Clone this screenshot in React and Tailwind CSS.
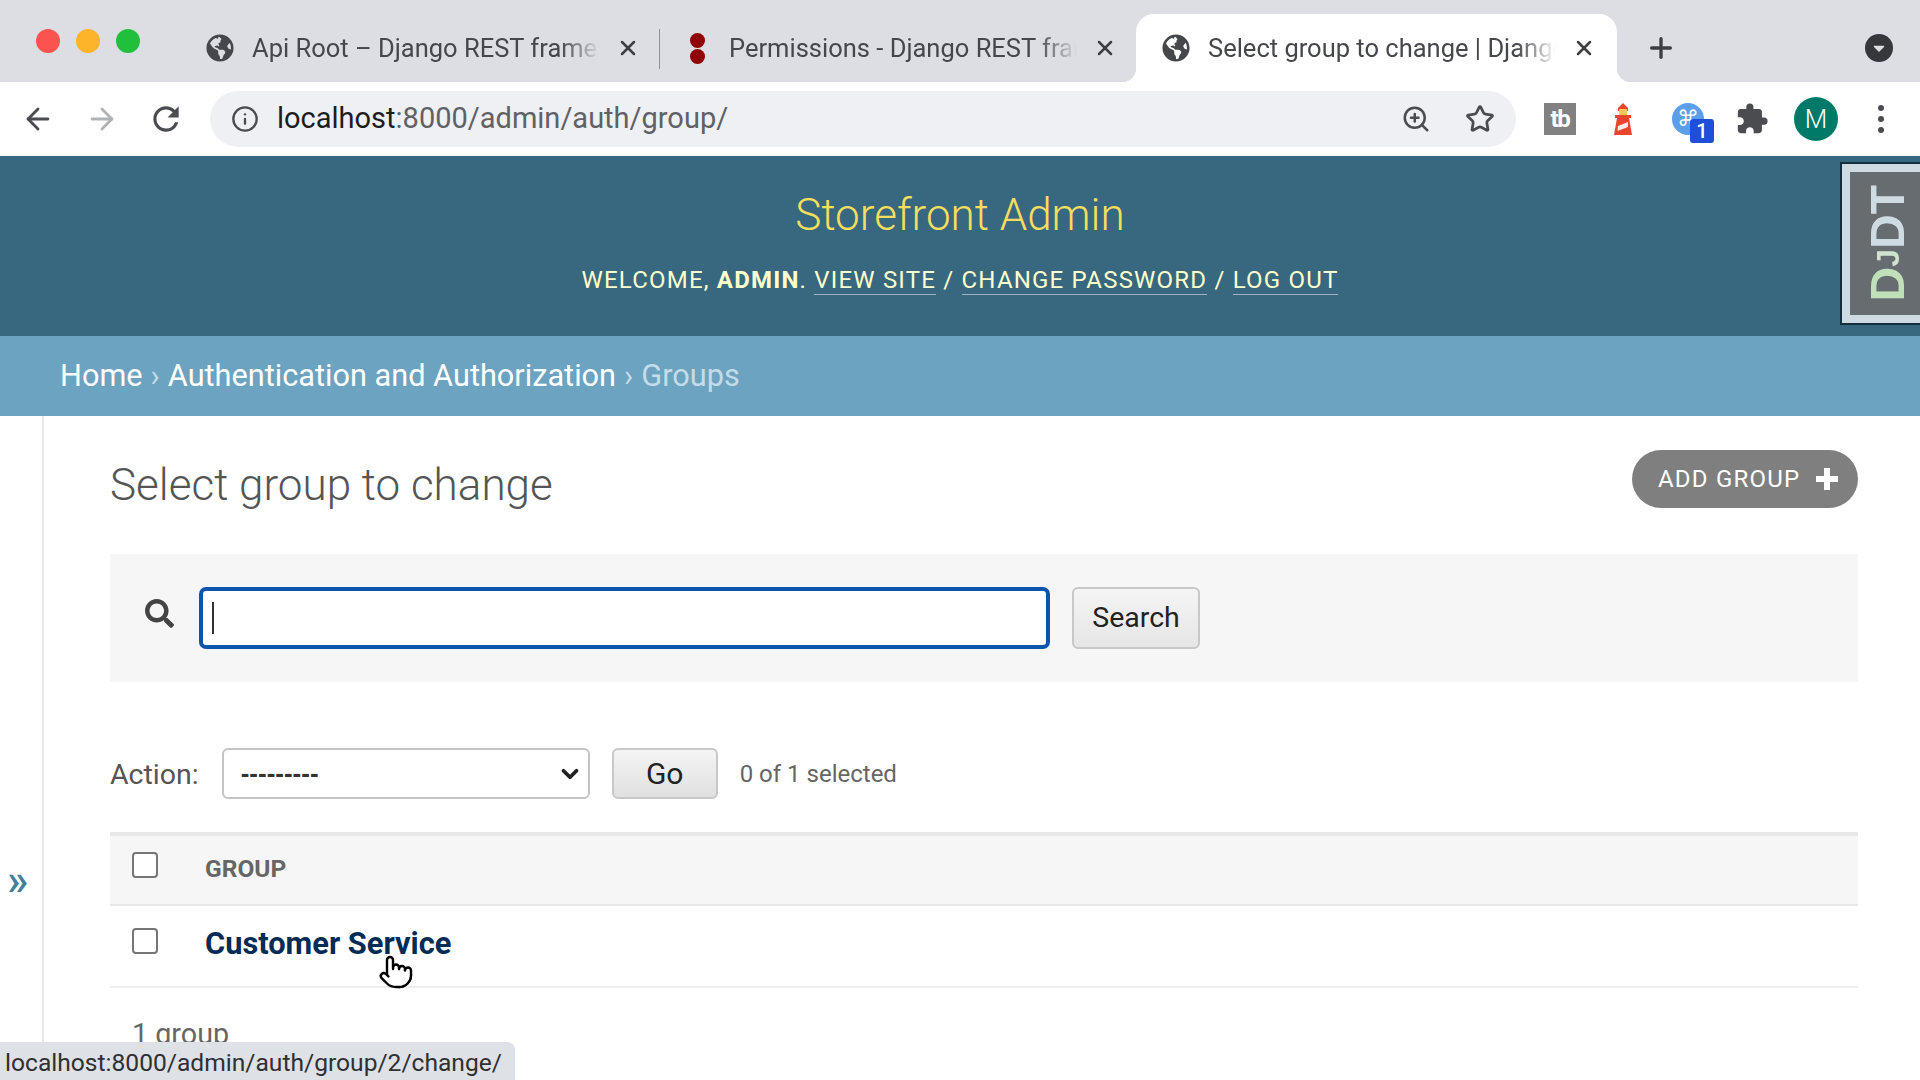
import React from 'react';
import { ArrowLeft, ArrowRight, Info, Star, X, Plus, ZoomIn, Pointer, ChevronDown } from 'lucide-react';
import { FaGlobeAmericas, FaSearch, FaCaretDown } from 'react-icons/fa';
import { MdExtension, MdRefresh } from 'react-icons/md';

const Tab = ({ icon, title, active, className }) => (
  <div className={`relative flex items-center h-[68px] ${active ? 'bg-white rounded-t-[18px]' : ''} ${className}`}>
    {active && (
      <>
        <div className="absolute -left-[14px] bottom-0 w-[14px] h-[14px] bg-[radial-gradient(circle_at_0_0,transparent_14px,white_14.500px)]" />
        <div className="absolute -right-[14px] bottom-0 w-[14px] h-[14px] bg-[radial-gradient(circle_at_100%_0,transparent_14px,white_14.500px)]" />
      </>
    )}
    <div className="w-[28px] flex justify-center shrink-0">{icon}</div>
    <div className="ml-[18px] w-[355px] whitespace-nowrap overflow-hidden text-[25.500px] text-[#45474b] [mask-image:linear-gradient(to_right,black_87%,transparent_98%)]">
      {title}
    </div>
    <X className="ml-[9px] w-[24px] h-[24px] text-[#3c3e42] shrink-0" strokeWidth={2.5} />
  </div>
);

const Checkbox = () => (
  <div className="w-[26px] h-[26px] rounded-[4px] border-2 border-[#767676] bg-white" />
);

const Lighthouse = () => (
  <svg viewBox="0 0 24 32" className="w-[28px] h-[32px]">
    <path d="M12 0l5 5v3H7V5z" fill="#e8452c" />
    <rect x="8" y="6" width="8" height="6" fill="#f6c958" />
    <rect x="4" y="12" width="16" height="3" fill="#e8452c" />
    <path d="M6 15h12l3 17H3z" fill="#e8452c" />
    <path d="M7 23l10-4v5L6.500 28z" fill="#fff" opacity="0.9" />
  </svg>
);

const App = () => {
  return (
    <div className="relative w-[1920px] h-[1080px] overflow-hidden bg-white [font-family:Roboto,sans-serif]">
      {/* tab strip */}
      <div className="flex items-end h-[82px] bg-[#dcdee3]">
        <div className="flex items-center gap-[16px] pl-[36px] w-[206px] self-start pt-[29px]">
          <div className="w-[24px] h-[24px] rounded-full bg-[#fb5350]" />
          <div className="w-[24px] h-[24px] rounded-full bg-[#fdb32a]" />
          <div className="w-[24px] h-[24px] rounded-full bg-[#20bf3c]" />
        </div>
        <Tab icon={<FaGlobeAmericas className="w-[28px] h-[28px] text-[#45474b]" />} title="Api Root – Django REST framework" className="w-[453px]" />
        <div className="w-[1px] h-[40px] bg-[#8e9094] mb-[13px]" />
        <Tab
          icon={
            <div className="flex flex-col items-center gap-[1px]">
              <div className="w-[15px] h-[15px] rounded-full bg-[#8f0000]" />
              <div className="w-[15px] h-[15px] rounded-full bg-[#8f0000]" />
            </div>
          }
          title="Permissions - Django REST framework"
          className="w-[476px] pl-[23px]"
        />
        <Tab
          active
          icon={<FaGlobeAmericas className="w-[28px] h-[28px] text-[#45474b]" />}
          title="Select group to change | Django site admin"
          className="w-[481px] pl-[26px]"
        />
        <Plus className="ml-[28px] mb-[18px] w-[32px] h-[32px] text-[#3c3e42]" strokeWidth={2.5} />
        <div className="ml-auto mr-[27px] mb-[20px] w-[28px] h-[28px] rounded-full bg-[#35373b] flex items-center justify-center">
          <FaCaretDown className="w-[18px] h-[18px] text-[#dcdee3]" />
        </div>
      </div>

      {/* toolbar */}
      <div className="flex items-center h-[74px] bg-white">
        <ArrowLeft className="ml-[21px] w-[34px] h-[34px] text-[#4a4c50]" strokeWidth={2} />
        <ArrowRight className="ml-[30px] w-[34px] h-[34px] text-[#b0b2b5]" strokeWidth={2} />
        <MdRefresh className="ml-[28px] w-[38px] h-[38px] text-[#4a4c50]" />
        <div className="ml-[25px] flex items-center w-[1306px] h-[56px] rounded-full bg-[#eef0f3]">
          <Info className="ml-[21px] w-[28px] h-[28px] text-[#4a4c50]" strokeWidth={2} />
          <div className="ml-[18px] text-[29px] text-[#5f6166]">
            <span className="text-[#1c1d20]">localhost</span>:8000/admin/auth/group/
          </div>
          <ZoomIn className="ml-auto w-[30px] h-[30px] text-[#4a4c50]" strokeWidth={2} />
          <Star className="ml-[34px] mr-[21px] w-[30px] h-[30px] text-[#4a4c50]" strokeWidth={2.2} />
        </div>
        <div className="ml-[28px] w-[32px] h-[32px] bg-[#818181] flex items-center justify-center text-white font-bold text-[24px] leading-none tracking-tighter">
          tb
        </div>
        <div className="ml-[33px] flex"><Lighthouse /></div>
        <div className="relative ml-[35px] w-[32px] h-[32px] rounded-full bg-[#5b9fe8] flex items-center justify-center text-white text-[22px] leading-none">
          ⌘
          <div className="absolute left-[18px] top-[16px] w-[24px] h-[24px] rounded-[3px] bg-[#1d4fd8] flex items-center justify-center text-[20px] font-medium">
            1
          </div>
        </div>
        <MdExtension className="ml-[31px] w-[34px] h-[34px] text-[#4a4c50]" />
        <div className="ml-[25px] w-[44px] h-[44px] rounded-full bg-[#007a68] flex items-center justify-center text-white text-[26px] font-light">
          M
        </div>
        <div className="ml-[40px] flex flex-col gap-[5px]">
          <div className="w-[6px] h-[6px] rounded-full bg-[#4a4c50]" />
          <div className="w-[6px] h-[6px] rounded-full bg-[#4a4c50]" />
          <div className="w-[6px] h-[6px] rounded-full bg-[#4a4c50]" />
        </div>
      </div>

      {/* admin header */}
      <div className="flex flex-col items-center h-[180px] pt-[32px] bg-[#376880]">
        <div className="text-[44px] leading-[54px] font-light text-[#f5dd5d]">Storefront Admin</div>
        <div className="mt-[20px] text-[24px] leading-[36px] tracking-[1.2px] uppercase text-[#ffc]">
          Welcome, <span className="font-bold">admin</span>.{' '}
          <span className="border-b border-[#9fb4bf]">View site</span> /{' '}
          <span className="border-b border-[#9fb4bf]">Change password</span> /{' '}
          <span className="border-b border-[#9fb4bf]">Log out</span>
        </div>
      </div>

      {/* breadcrumbs */}
      <div className="flex items-center h-[80px] pl-[60px] bg-[#6ba3c0] text-[30.700px] text-white">
        Home<span className="mx-[8px] text-[#c4dce8]">›</span>Authentication and Authorization
        <span className="mx-[8px] text-[#c4dce8]">›</span><span className="text-[#c4dce8]">Groups</span>
      </div>

      <div className="flex">
        {/* collapsed nav sidebar */}
        <div className="w-[44px] h-[664px] border-r-2 border-[#e8e8e8] flex flex-col">
          <div className="mt-[440px] pl-[7px] text-[44px] leading-[48px] font-medium text-[#447e9b]">»</div>
        </div>

        {/* content */}
        <div className="w-[1748px] ml-[66px]">
          <div className="flex items-start justify-between pt-[34px] h-[138px]">
            <h1 className="mt-[6px] text-[44px] leading-[58px] font-light text-[#555]">Select group to change</h1>
            <div className="flex items-center h-[58px] w-[226px] pl-[26px] rounded-full bg-[#7f7f7f] text-white text-[24px] tracking-[1.2px]">
              ADD GROUP
              <svg viewBox="0 0 22 22" className="ml-[16px] w-[22px] h-[22px]">
                <path d="M8 0h6v8h8v6h-8v8H8v-8H0V8h8z" fill="#fff" />
              </svg>
            </div>
          </div>

          <div className="flex items-center h-[128px] bg-[#f6f6f7]">
            <FaSearch className="ml-[35px] w-[29px] h-[29px] text-[#444] -mt-[10px]" />
            <div className="relative ml-[25px]">
              <input className="block w-[851px] h-[62px] rounded-[7px] border-4 border-[#0b55ad] bg-white outline-none" />
              <div className="absolute left-[13px] top-[15px] w-[2px] h-[32px] bg-[#333]" />
            </div>
            <div className="ml-[22px] w-[128px] h-[62px] rounded-[6px] border-2 border-[#c8c8c8] bg-gradient-to-b from-[#f4f4f4] to-[#e6e6e6] flex items-center justify-center text-[28.500px] text-[#222]">
              Search
            </div>
          </div>

          <div className="flex items-center mt-[66px] h-[51px]">
            <span className="pt-[3px] text-[28.500px] text-[#555]">Action:</span>
            <div className="relative ml-[23px]">
              <select className="block appearance-none w-[368px] h-[51px] pl-[17px] rounded-[6px] border-2 border-[#c4c4c4] bg-white text-[26px] font-bold text-[#333] [font-family:'Liberation_Sans',sans-serif]">
                <option>---------</option>
              </select>
              <ChevronDown className="absolute right-[7px] top-[13px] w-[26px] h-[26px] text-[#222]" strokeWidth={3.5} />
            </div>
            <div className="ml-[22px] w-[106px] h-[51px] rounded-[6px] border-2 border-[#c8c8c8] bg-gradient-to-b from-[#f4f4f4] to-[#e0e0e0] flex items-center justify-center text-[30px] text-[#222]">
              Go
            </div>
            <span className="ml-[22px] text-[24px] text-[#666]">0 of 1 selected</span>
          </div>

          <div className="mt-[33px] h-[74px] flex bg-[#f6f6f6] border-t-[4px] border-b-2 border-[#e8e8e8]">
            <div className="pl-[22px] pt-[16px]"><Checkbox /></div>
            <div className="ml-[47px] pt-[18px] text-[24.500px] leading-[30px] font-bold text-[#666]">GROUP</div>
          </div>
          <div className="h-[82px] flex border-b-2 border-[#eee]">
            <div className="pl-[22px] pt-[22px]"><Checkbox /></div>
            <div className="ml-[47px] pt-[18px] text-[30.800px] leading-[40px] font-bold text-[#022b56]">Customer Service</div>
          </div>
          <div className="mt-[26px] pl-[22px] text-[28.700px] leading-[40px] text-[#666]">1 group</div>
        </div>
      </div>

      {/* DjDT handle */}
      <div className="absolute left-[1840px] top-[162px] w-[100px] h-[163px] border-2 border-[#14303f] bg-[#666c70] outline-[8px] outline-[#cfdbe2] -outline-offset-[10px] flex items-center">
        <div className="ml-[22px] [writing-mode:vertical-rl] rotate-180 text-[48px] leading-none font-bold text-[#cfdbe2] [font-family:'Liberation_Sans',sans-serif]">
          <span className="text-[#bfe0b9]">D</span><span className="text-[#cfe4ce] text-[32px]">J</span>DT
        </div>
      </div>

      {/* hover cursor */}
      <Pointer className="absolute left-[378px] top-[954px] w-[36px] h-[36px] text-black fill-white" strokeWidth={1.6} />

      {/* link status bubble */}
      <div className="absolute left-0 bottom-0 w-[515px] h-[38px] pl-[5px] rounded-tr-[8px] bg-[#dee1e6] text-[24.600px] leading-[42px] text-[#2f3033] whitespace-nowrap">
        localhost:8000/admin/auth/group/2/change/
      </div>
    </div>
  );
};

export default App;
